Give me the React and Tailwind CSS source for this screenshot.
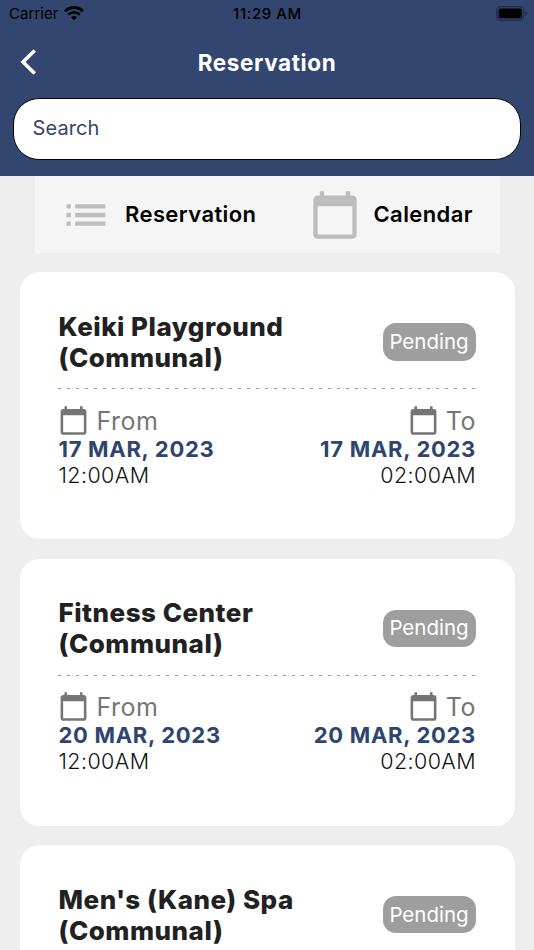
const CALENDAR =
  "M20 3h-1V1h-2v2H7V1H5v2H4c-1.1 0-2 .9-2 2v16c0 1.1.9 2 2 2h16c1.1 0 2-.9 2-2V5c0-1.1-.9-2-2-2zm0 18H4V8h16v13z";
const LIST =
  "M3 13h2v-2H3v2zm0 4h2v-2H3v2zm0-8h2V7H3v2zm4 4h14v-2H7v2zm0 4h14v-2H7v2zM7 7v2h14V7H7z";

function Glyph({ d, className }) {
  return (
    <svg viewBox="0 0 24 24" fill="currentColor" className={className}>
      <path d={d} />
    </svg>
  );
}

function StatusBar() {
  return (
    <div className="grid h-7 grid-cols-3 items-center pr-[7px] pl-[9px] text-[15px] text-black">
      <div className="flex items-center gap-[5px]">
        <span className="tracking-[0.05px]">Carrier</span>
        <svg viewBox="0 0 20 15" className="mb-0.5 h-[15px] w-5" fill="none" stroke="currentColor">
          <path d="M1.1 5.2a12.6 12.6 0 0 1 17.8 0" strokeWidth="2.8" />
          <path d="M4.3 8.6a8.1 8.1 0 0 1 11.4 0" strokeWidth="2.6" />
          <path d="M10 14.3 6.9 11.2a4.4 4.4 0 0 1 6.2 0z" fill="currentColor" stroke="none" />
        </svg>
      </div>
      <span className="pr-px text-center font-medium tracking-[0.6px] whitespace-nowrap">11:29 AM</span>
      <svg viewBox="0 0 31 15" className="mb-0.5 h-[15px] w-[31px] justify-self-end" fill="none">
        <rect x="0.7" y="0.7" width="27" height="13.4" rx="3.8" stroke="#1f2b46" strokeWidth="1.2" />
        <rect x="2.6" y="2.6" width="23.2" height="9.6" rx="2" fill="#000" />
        <path d="M29.3 5.2c1.9.8 1.9 3.6 0 4.4z" fill="#1f2b46" />
      </svg>
    </div>
  );
}

function Slot({ label, date, time, end }) {
  return (
    <div className={end ? "flex flex-col items-end" : "-ml-px flex flex-col items-start"}>
      <div className={`flex h-[31px] items-center text-[#757575] ${end ? "gap-[7px]" : "gap-2"}`}>
        <Glyph d={CALENDAR} className="size-[31px]" />
        <span className="pt-px text-[25px]/8 tracking-[0.5px]">{label}</span>
      </div>
      <span className={`text-[22px]/[26px] font-bold tracking-[0.7px] text-[#2f446f] ${end ? "" : "pl-px"}`}>
        {date}
      </span>
      <span className={`text-[21.5px]/[26px] font-light tracking-[0.4px] text-[#111111] ${end ? "" : "pl-px"}`}>
        {time}
      </span>
    </div>
  );
}

function Card({ name, date }) {
  return (
    <article className="h-[267px] shrink-0 rounded-[20px] bg-white pt-[38.5px] pr-[38.5px] pl-[39px]">
      <div className="flex items-center justify-between">
        <h2 className="w-[260px] text-[26px]/[31px] font-extrabold tracking-[0.5px] text-[#212121]">
          {name}
          <br />
          (Communal)
        </h2>
        <span className="flex h-[37.5px] w-[93px] items-center justify-center rounded-[13px] bg-[#9e9e9e] pt-px pr-px text-[20.5px] text-white">
          Pending
        </span>
      </div>
      <div className="mt-[15.5px] -ml-px h-px bg-[repeating-linear-gradient(90deg,#9a9a9a_0_3px,transparent_3px_9px)]" />
      <div className="mt-[15.5px] flex justify-between">
        <Slot label="From" date={date} time="12:00AM" />
        <Slot label="To" date={date} time="02:00AM" end />
      </div>
    </article>
  );
}

export default function App() {
  return (
    <div className="h-[950px] w-[534px] overflow-hidden bg-[#eeeeee] font-['Inter',sans-serif]">
      <header className="h-44 bg-[#32466f]">
        <StatusBar />
        <div className="grid h-[70px] grid-cols-[60px_1fr_60px] items-center">
          <svg viewBox="0 0 16 26" className="mb-0.5 ml-5 h-[26px] w-4" fill="none" stroke="#fff" strokeWidth="3.6">
            <path d="M14.7 1.5 3 13l11.7 11.5" />
          </svg>
          <h1 className="text-center text-[22.5px] font-bold tracking-[0.6px] text-white">Reservation</h1>
        </div>
        <div className="mx-[13px] flex h-[62px] items-center rounded-[26px] border-[1.5px] border-black bg-white pb-0.5 pl-[18.5px] text-[20px] tracking-[0.1px] text-[#32466f]">
          Search
        </div>
      </header>
      <nav className="mx-[34.5px] flex h-[77px] items-center bg-[#f5f5f5] text-[22px] font-semibold text-black">
        <Glyph d={LIST} className="ml-[25.5px] size-[52px] text-[#bdbdbd]" />
        <span className="ml-[13px] w-[184px] tracking-[0.4px]">Reservation</span>
        <Glyph d={CALENDAR} className="size-[52px] text-[#bdbdbd]" />
        <span className="ml-[12.5px] tracking-[0.4px]">Calendar</span>
      </nav>
      <main className="mx-[19.5px] mt-[19.4px] flex flex-col gap-[19.4px]">
        <Card name="Keiki Playground" date="17 MAR, 2023" />
        <Card name="Fitness Center" date="20 MAR, 2023" />
        <Card name="Men's (Kane) Spa" date="20 MAR, 2023" />
      </main>
    </div>
  );
}
